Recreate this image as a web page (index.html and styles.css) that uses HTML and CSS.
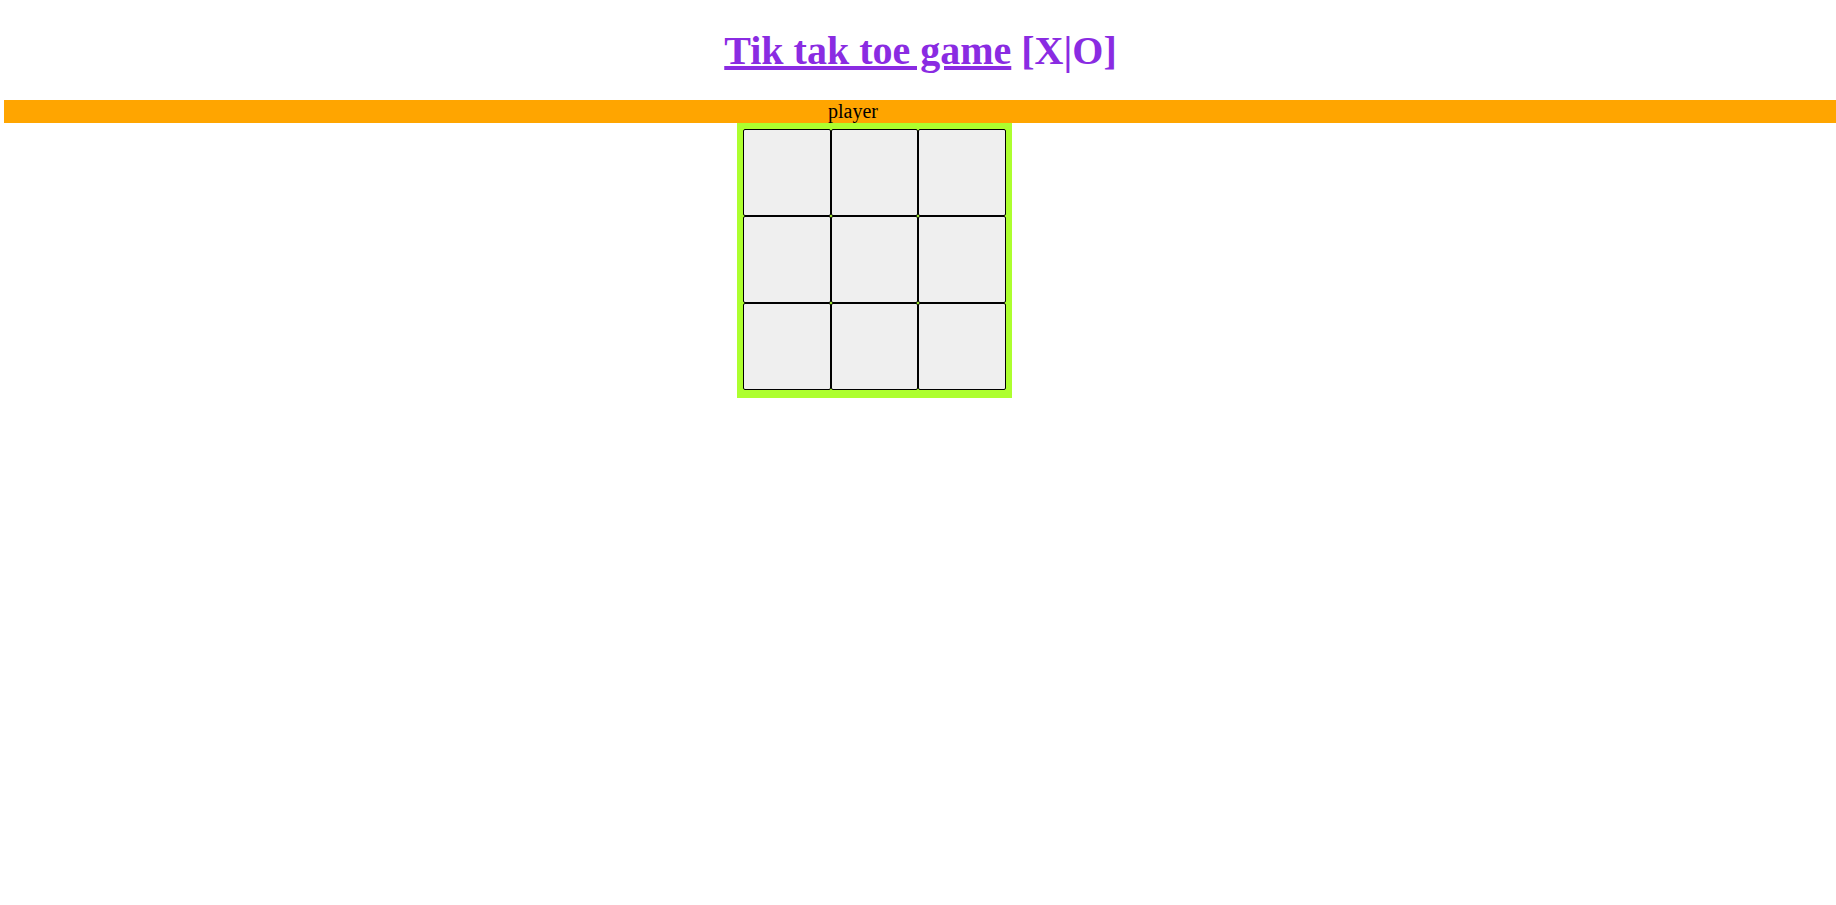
FILE: index.html
```html
<!DOCTYPE html>
<html>
<head>
<meta charset="utf-8">
<title>Tik tak toe game</title>
<link rel="stylesheet" href="styles.css">
</head>
<body>
<h1 class="title"><a class="title-link" href="#">Tik tak toe game</a> [X|O]</h1>
<div class="player-bar"><span class="player-label">player</span></div>
<div class="board-row">
  <div class="board">
    <button class="cell"></button>
    <button class="cell"></button>
    <button class="cell"></button>
    <button class="cell"></button>
    <button class="cell"></button>
    <button class="cell"></button>
    <button class="cell"></button>
    <button class="cell"></button>
    <button class="cell"></button>
  </div>
</div>
</body>
</html>
```

FILE: styles.css
```css
html, body {
  margin: 0;
  padding: 0;
  background: #ffffff;
  font-family: "Liberation Serif", "Times New Roman", serif;
  overflow: hidden;
}

.title {
  font-size: 40px;
  font-weight: bold;
  text-align: center;
  color: #8a2be2;
  margin: 26.5px 0 26.5px;
  padding-left: 5px;
}

.title-link {
  color: #8a2be2;
  text-decoration: underline;
}

.player-bar {
  margin-left: 4px;
  height: 23px;
  background: #ffa500;
  font-size: 20px;
  line-height: 23px;
  color: #000;
  padding-left: 824px;
}

.board-row {
  display: flex;
  padding-left: 737px;
}

.board {
  width: 275px;
  height: 275px;
  box-sizing: border-box;
  padding: 6px;
  background: #adff2f;
  display: grid;
  grid-template-columns: repeat(3, 1fr);
  grid-template-rows: repeat(3, 87px);
}

.cell {
  margin: 0;
  padding: 0;
  background: #efefef;
  border: 1px solid #000;
  border-radius: 2px;
}
```
